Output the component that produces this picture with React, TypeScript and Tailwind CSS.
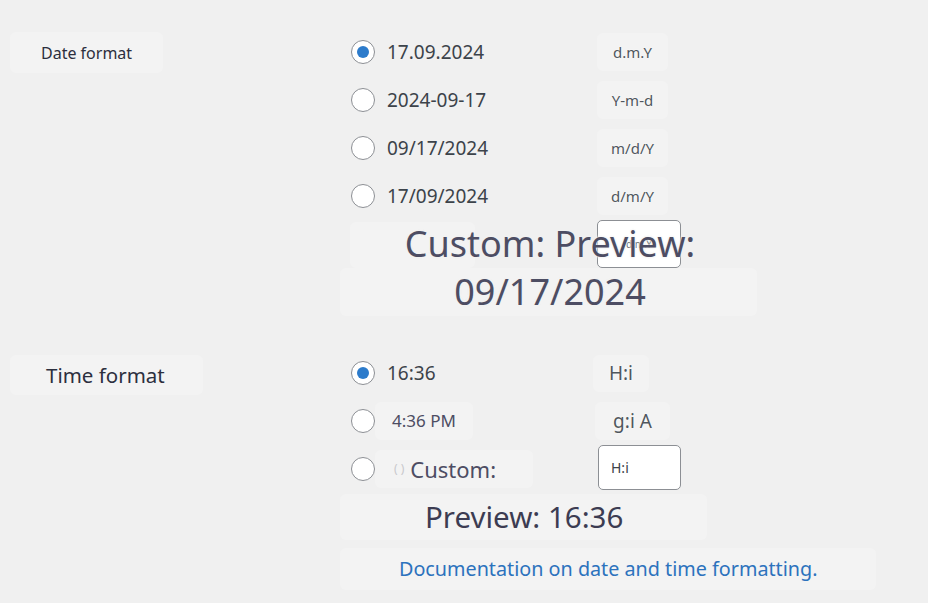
import React from 'react';

function Radio({ checked }: { checked?: boolean }) {
  return (
    <span className="w-6 h-6 shrink-0 rounded-full border border-[#8c8f94] bg-white flex items-center justify-center">
      {checked && <span className="w-3 h-3 rounded-full bg-[#2c7bcb]" />}
    </span>
  );
}

function Code({ children, className }: { children: React.ReactNode; className: string }) {
  return (
    <span className={`bg-[#f3f3f3] rounded-md flex items-center justify-center text-[#50575e] [text-shadow:0_0_2px_#fff] ${className}`}>
      {children}
    </span>
  );
}

const dates = [
  { label: '17.09.2024', code: 'd.m.Y', checked: true },
  { label: '2024-09-17', code: 'Y-m-d' },
  { label: '09/17/2024', code: 'm/d/Y' },
  { label: '17/09/2024', code: 'd/m/Y' },
];

export default function App() {
  return (
    <div className="min-h-screen bg-[#f0f0f0] font-['Noto_Sans',sans-serif] pt-[28px]">
      {/* date format */}
      <section className="flex">
        <div className="w-[340px] pl-[10px] pt-1">
          <div className="w-[153px] h-[41px] pl-[31px] flex items-center bg-[#f3f3f3] rounded-md text-[16px] text-[#2c2f3e]">
            Date format
          </div>
        </div>
        <div className="flex-1">
          {dates.map((d) => (
            <div key={d.code} className="h-12 flex items-center pl-[11px]">
              <Radio checked={d.checked} />
              <span className="ml-3 w-[210px] text-[19px] text-[#3c434a]">{d.label}</span>
              <Code className="w-[71px] h-[38px] text-[15px]">{d.code}</Code>
            </div>
          ))}
          <div className="relative h-[96px]">
            <div className="h-12 flex">
              <div className="ml-[10px] mt-[2px] w-[125px] h-[46px] bg-[#f3f3f3] rounded-md" />
              <div className="ml-[122px] w-[84px] h-[48px] bg-white border border-[#8c8f94] rounded-[5px] flex items-center justify-center text-[10px] text-[#50575e]">
                d.m.Y
              </div>
            </div>
            <div className="w-[417px] h-12 bg-[#f3f3f3] rounded-md" />
            <div className="absolute left-0 top-0 w-[420px] text-center text-[36px] leading-[48px] text-[#4d4d63] [text-shadow:0_0_3px_#f0f0f0,0_0_3px_#f0f0f0]">
              Custom: Preview:
              <br />
              09/17/2024
            </div>
          </div>
        </div>
      </section>

      {/* time format */}
      <section className="flex mt-[33px]">
        <div className="w-[340px] pl-[10px] pt-[6px]">
          <div className="w-[193px] h-[40px] pl-[36px] flex items-center bg-[#f3f3f3] rounded-md text-[20.5px] text-[#2c2f3e]">
            Time format
          </div>
        </div>
        <div className="flex-1">
          <div className="h-12 flex items-center pl-[11px]">
            <Radio checked />
            <span className="ml-3 w-[206px] text-[19px] text-[#3c434a]">16:36</span>
            <Code className="w-[56px] h-[37px] text-[19px]">H:i</Code>
          </div>
          <div className="h-12 flex items-center pl-[11px]">
            <Radio />
            <span className="w-[98px] h-[38px] pl-[17px] flex items-center bg-[#f3f3f3] rounded-md text-[17px] text-[#4d4d63]">
              4:36 PM
            </span>
            <Code className="ml-[122px] w-[75px] h-[38px] text-[19px]">g:i A</Code>
          </div>
          <div className="h-12 flex items-center pl-[11px]">
            <Radio />
            <span className="w-[158px] h-[38px] pl-[19px] flex items-center bg-[#f3f3f3] rounded-md text-[22px] text-[#4d4d63]">
              <span className="text-[12px] text-[#c8c8cc] mr-[6px]">( )</span>
              Custom:
            </span>
            <span className="ml-[65px] self-start w-[83px] h-[45px] bg-white border border-[#8c8f94] rounded-[5px] flex items-center pl-3 text-[14px] text-[#3c434a]">
              H:i
            </span>
          </div>
          <div className="mt-px w-[367px] h-[46px] pl-[85px] flex items-center bg-[#f3f3f3] rounded-md text-[29.5px] text-[#3c3c52]">
            Preview: 16:36
          </div>
          <div className="mt-2 w-[536px] h-[42px] pl-[59px] flex items-center bg-[#f3f3f3] rounded-md text-[19.75px]">
            <a href="#" className="text-[#2c72bd]">Documentation on date and time formatting.</a>
          </div>
        </div>
      </section>
    </div>
  );
}
